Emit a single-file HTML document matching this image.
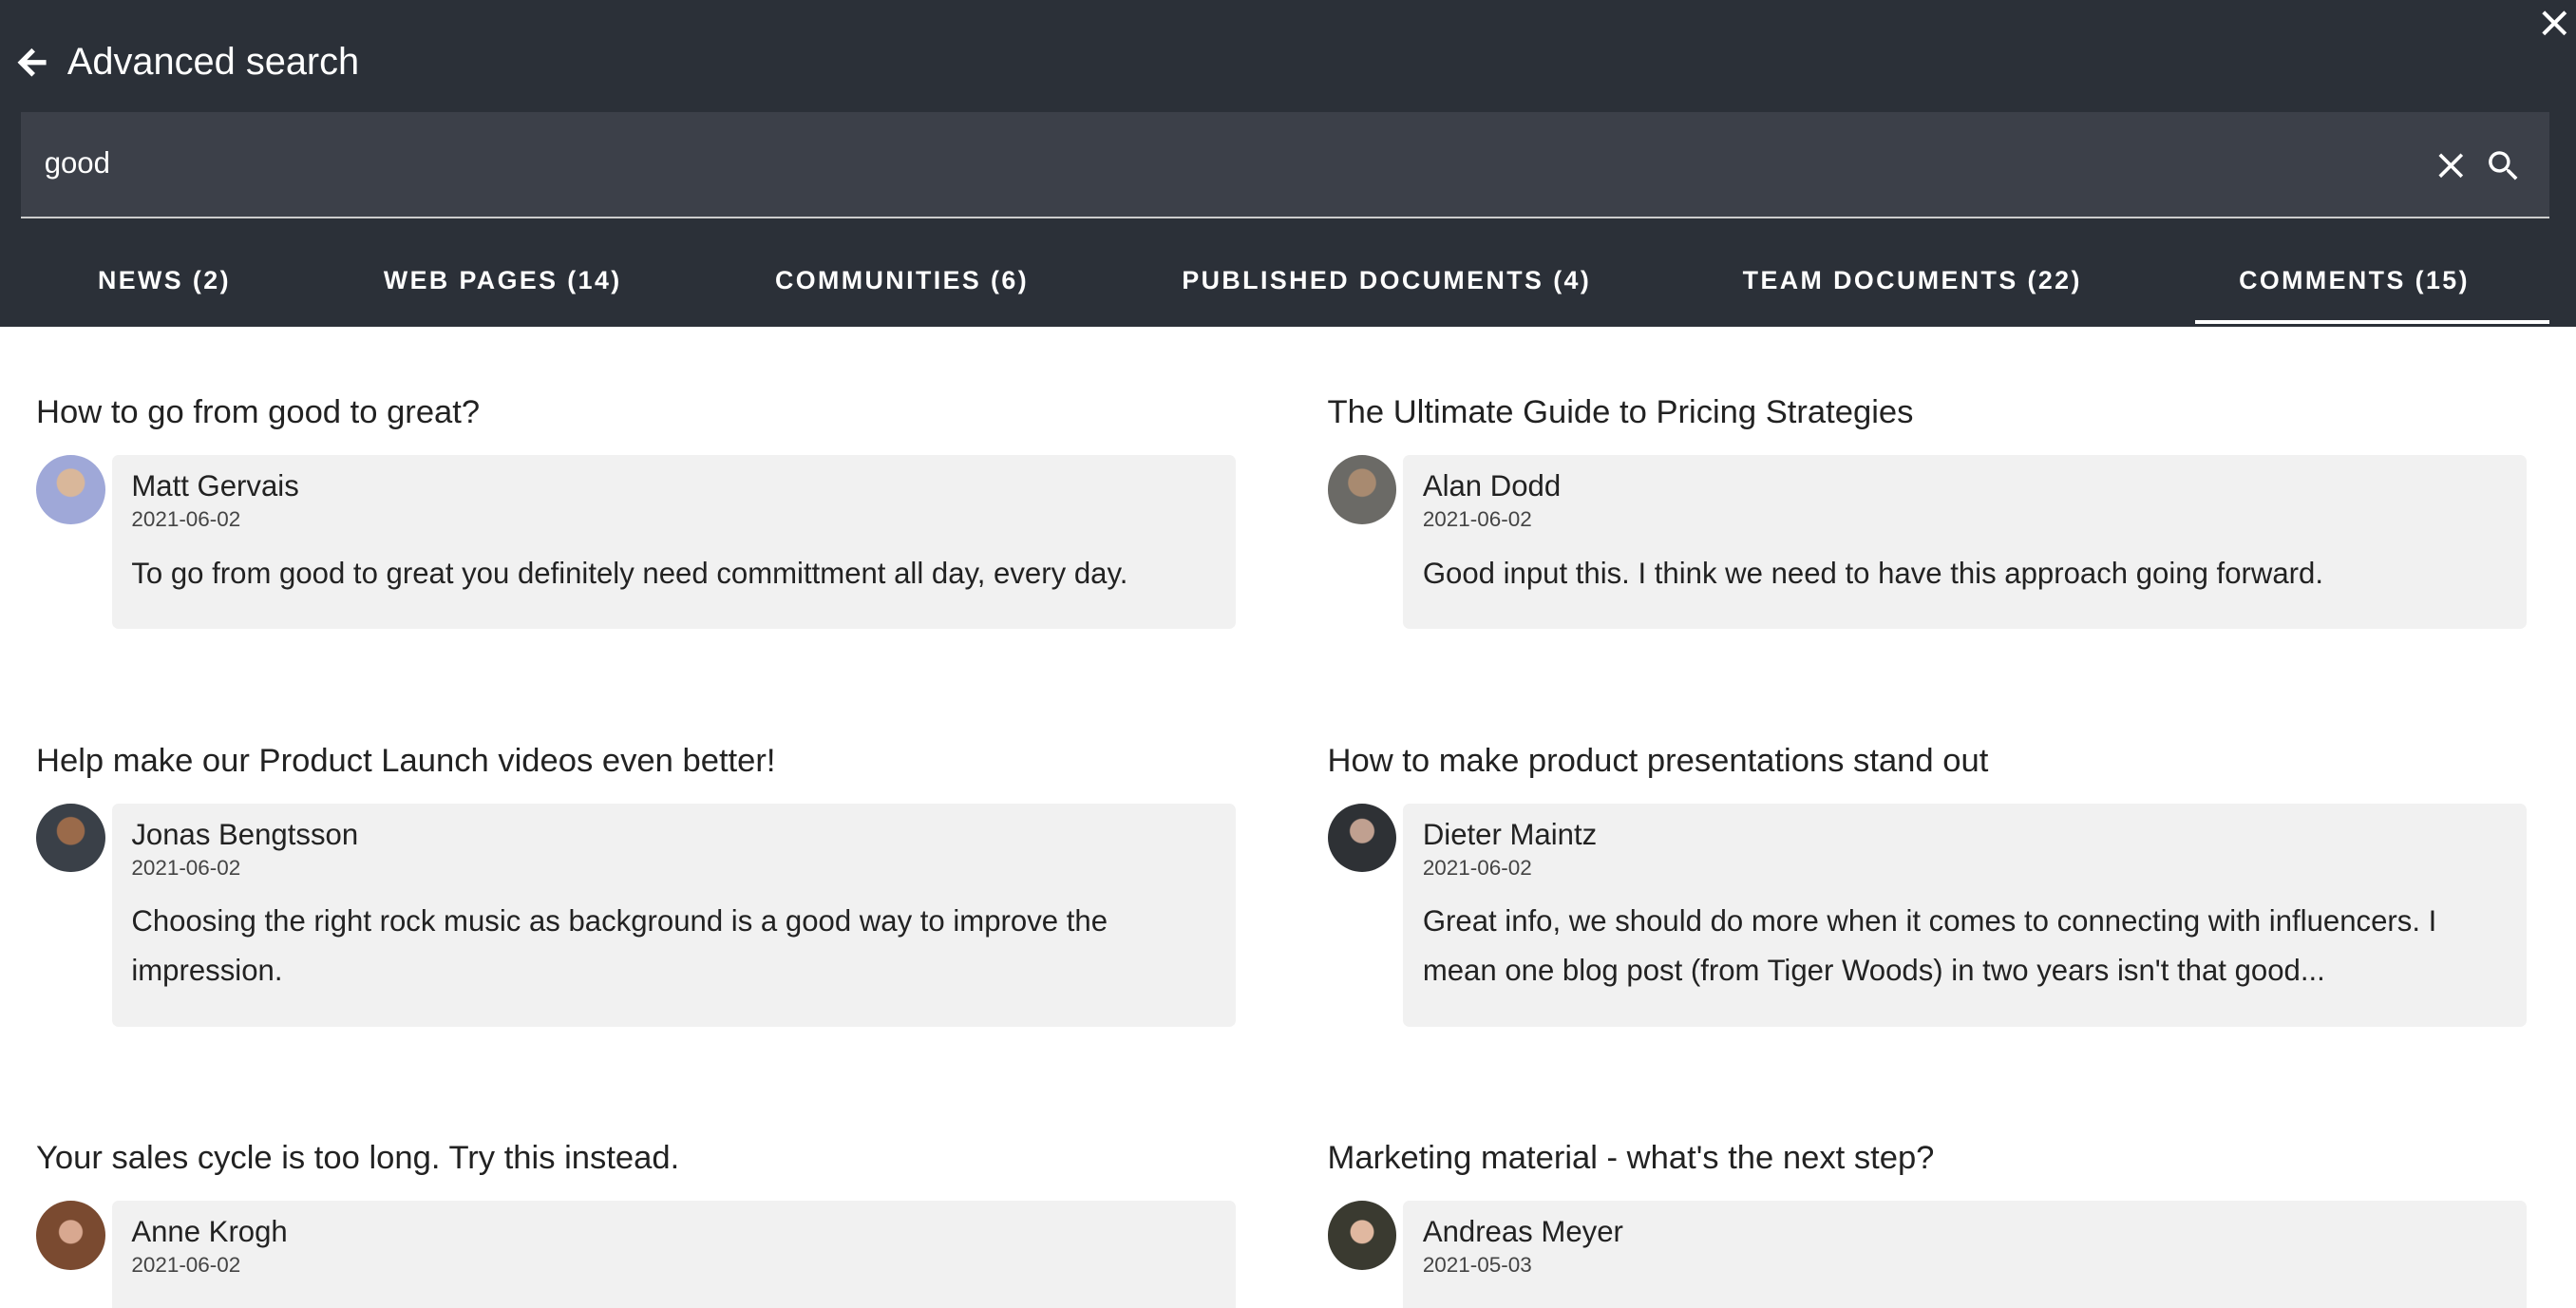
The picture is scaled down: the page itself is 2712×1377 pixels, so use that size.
<!DOCTYPE html>
<html><head><meta charset="utf-8"><style>
*{margin:0;padding:0;box-sizing:border-box}
html,body{width:2712px;height:1377px;overflow:hidden;background:#fff}
#z{zoom:1.7296;width:1568px;height:796px;position:relative;font-family:"Liberation Sans",Roboto,sans-serif;overflow:hidden}
.hdr{position:absolute;left:0;top:0;width:1568px;height:199px;background:#2b3038}
.title{position:absolute;left:41px;top:25px;color:#fff;font-size:23px}
.sb{position:absolute;left:13px;top:68px;width:1539px;height:65px;background:#3c4049;border-bottom:1.5px solid #ccc}
.sb span{position:absolute;left:14px;top:21px;color:#fff;font-size:18px}
.tab{position:absolute;top:162px;color:#fff;font-size:15.5px;font-weight:bold;letter-spacing:1.4px;transform:translateX(-50%);white-space:nowrap}
.ul{position:absolute;left:1336px;top:195px;width:216px;height:2px;background:#fff}
.it{position:absolute;width:730px}
.it h3{font-weight:normal;font-size:20px;color:#222;position:absolute;left:0;top:-11px;white-space:nowrap}
.av{position:absolute;left:0;top:26px;width:42px;height:42px;border-radius:50%}
.card{position:absolute;left:46px;top:26px;width:684px;background:#f1f1f1;border-radius:4px;padding:8px 12px 20px}
.nm{font-size:18px;color:#222;line-height:22px}
.dt{font-size:13px;color:#444;line-height:18px;margin-bottom:9px}
.tx{font-size:18px;color:#222;line-height:30px}
</style></head><body><div id="z">
<div class="hdr">
<svg style="position:absolute;left:8px;top:26px" width="24" height="24" viewBox="0 0 24 24"><path d="M20 10.5H8.3l5-5L11.2 3.4 2.6 12l8.6 8.6 2.1-2.1-5-5H20z" fill="#fff"/></svg>
<div class="title">Advanced search</div>
<svg style="position:absolute;left:1545px;top:4px" width="20" height="20" viewBox="0 0 24 24"><path d="M4 4L20 20M20 4L4 20" stroke="#fff" stroke-width="2.8"/></svg>
<div class="sb"><span>good</span>
<svg style="position:absolute;left:1469px;top:23px" width="20" height="20" viewBox="0 0 24 24"><path d="M4 4L20 20M20 4L4 20" stroke="#fff" stroke-width="2.5"/></svg>
<svg style="position:absolute;left:1499px;top:21px" width="24" height="24" viewBox="0 0 24 24"><path d="M15.5 14h-.8l-.3-.3A6.5 6.5 0 1 0 9.5 16a6.5 6.5 0 0 0 4.2-1.6l.3.3v.8l5 5 1.5-1.5-5-5zm-6 0C7 14 5 12 5 9.5S7 5 9.5 5 14 7 14 9.5 12 14 9.5 14z" fill="#fff"/></svg>
</div>
<div class="tab" style="left:100px">NEWS (2)</div>
<div class="tab" style="left:306px">WEB PAGES (14)</div>
<div class="tab" style="left:549px">COMMUNITIES (6)</div>
<div class="tab" style="left:844px">PUBLISHED DOCUMENTS (4)</div>
<div class="tab" style="left:1164px">TEAM DOCUMENTS (22)</div>
<div class="tab" style="left:1433px">COMMENTS (15)</div>
<div class="ul"></div>
</div>

<div class="it" style="left:22px;top:251px"><h3>How to go from good to great?</h3><div class="av" style="background:radial-gradient(circle at 50% 40%,#d9b79a 0 25%,#9fa8d8 27%)"></div><div class="card" style="height:106px"><div class="nm">Matt Gervais</div><div class="dt">2021-06-02</div><div class="tx">To go from good to great you definitely need committment all day, every day.</div></div></div>
<div class="it" style="left:808px;top:251px"><h3>The Ultimate Guide to Pricing Strategies</h3><div class="av" style="background:radial-gradient(circle at 50% 40%,#a88a70 0 25%,#6b6a66 27%)"></div><div class="card" style="height:106px"><div class="nm">Alan Dodd</div><div class="dt">2021-06-02</div><div class="tx">Good input this. I think we need to have this approach going forward.</div></div></div>

<div class="it" style="left:22px;top:463px"><h3>Help make our Product Launch videos even better!</h3><div class="av" style="background:radial-gradient(circle at 50% 40%,#9a6a4a 0 25%,#3a4048 27%)"></div><div class="card" style="height:136px"><div class="nm">Jonas Bengtsson</div><div class="dt">2021-06-02</div><div class="tx">Choosing the right rock music as background is a good way to improve the impression.</div></div></div>
<div class="it" style="left:808px;top:463px"><h3>How to make product presentations stand out</h3><div class="av" style="background:radial-gradient(circle at 50% 40%,#c0a090 0 22%,#2e3135 24%)"></div><div class="card" style="height:136px"><div class="nm">Dieter Maintz</div><div class="dt">2021-06-02</div><div class="tx">Great info, we should do more when it comes to connecting with influencers. I mean one blog post (from Tiger Woods) in two years isn't that good...</div></div></div>

<div class="it" style="left:22px;top:705px"><h3>Your sales cycle is too long. Try this instead.</h3><div class="av" style="background:radial-gradient(circle at 50% 45%,#d8a890 0 22%,#7a4a30 24%)"></div><div class="card" style="height:136px"><div class="nm">Anne Krogh</div><div class="dt">2021-06-02</div></div></div>
<div class="it" style="left:808px;top:705px"><h3>Marketing material - what's the next step?</h3><div class="av" style="background:radial-gradient(circle at 50% 45%,#e0b8a0 0 22%,#3a3a30 24%)"></div><div class="card" style="height:136px"><div class="nm">Andreas Meyer</div><div class="dt">2021-05-03</div></div></div>
</div></body></html>
